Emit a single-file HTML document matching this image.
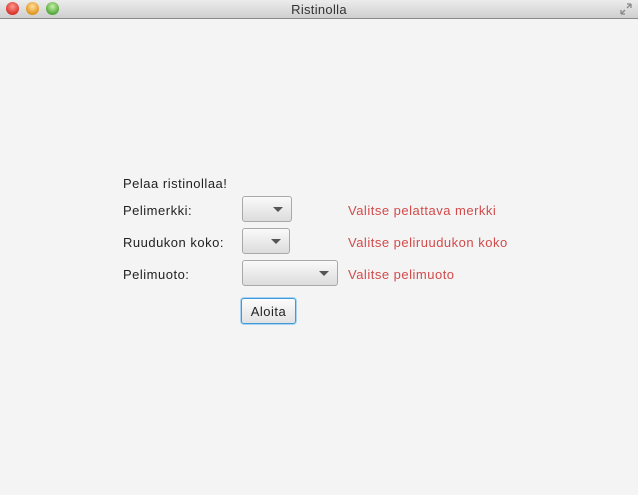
<!DOCTYPE html>
<html><head><meta charset="utf-8"><style>
html,body{margin:0;padding:0;width:638px;height:495px;overflow:hidden;background:#f4f4f4;font-family:"Liberation Sans",sans-serif;}
.tb{position:absolute;left:0;top:0;width:638px;height:18px;background:linear-gradient(#ececec,#cfcfcf);border-bottom:1px solid #8a8a8a;}
.tb .t{position:absolute;left:0;right:0;top:2px;text-align:center;font-size:13px;color:#333;letter-spacing:0.3px;}
.dot{position:absolute;top:2px;width:13px;height:13px;border-radius:50%;}
.lbl,.red{position:absolute;font-size:13px;letter-spacing:0.5px;}
.lbl{color:#222;}
.red{color:#d24a4a;}
.cb{position:absolute;border:1px solid #a9a9a9;border-radius:3px;background:linear-gradient(#fafafa,#dcdcdc);box-sizing:border-box;}
.cb:after{content:"";position:absolute;right:8px;top:10px;border-left:5px solid transparent;border-right:5px solid transparent;border-top:5px solid #555;}
.btn{position:absolute;left:241px;top:298px;width:55px;height:26px;box-sizing:border-box;border:1px solid #3d9bd9;border-radius:3px;background:linear-gradient(#fcfcfc,#e2e2e2);box-shadow:0 0 0 1px #a8d3f2;font-size:13px;letter-spacing:0.5px;text-align:center;line-height:25px;color:#222;}
</style></head><body>
<div class="tb"><div class="t">Ristinolla</div>
<div class="dot" style="left:6px;background:radial-gradient(circle at 50% 35%,#ff9a90,#d8322a 70%);"></div>
<div class="dot" style="left:26px;background:radial-gradient(circle at 50% 35%,#ffe0a0,#e0961c 70%);"></div>
<div class="dot" style="left:46px;background:radial-gradient(circle at 50% 35%,#c8f0a8,#52a83a 70%);"></div>
<svg style="position:absolute;right:6px;top:3px" width="12" height="12"><path d="M1 11L5 7M1 11h4M1 11V7M11 1L7 5M11 1H7M11 1v4" stroke="#888" stroke-width="1.3" fill="none"/></svg>
</div>
<div class="lbl" style="left:123px;top:176px">Pelaa ristinollaa!</div>
<div class="lbl" style="left:123px;top:203px">Pelimerkki:</div>
<div class="lbl" style="left:123px;top:235px">Ruudukon koko:</div>
<div class="lbl" style="left:123px;top:267px">Pelimuoto:</div>
<div class="cb" style="left:242px;top:196px;width:50px;height:26px"></div>
<div class="cb" style="left:242px;top:228px;width:48px;height:26px"></div>
<div class="cb" style="left:242px;top:260px;width:96px;height:26px"></div>
<div class="red" style="left:348px;top:203px">Valitse pelattava merkki</div>
<div class="red" style="left:348px;top:235px">Valitse peliruudukon koko</div>
<div class="red" style="left:348px;top:267px">Valitse pelimuoto</div>
<div class="btn">Aloita</div>
</body></html>
